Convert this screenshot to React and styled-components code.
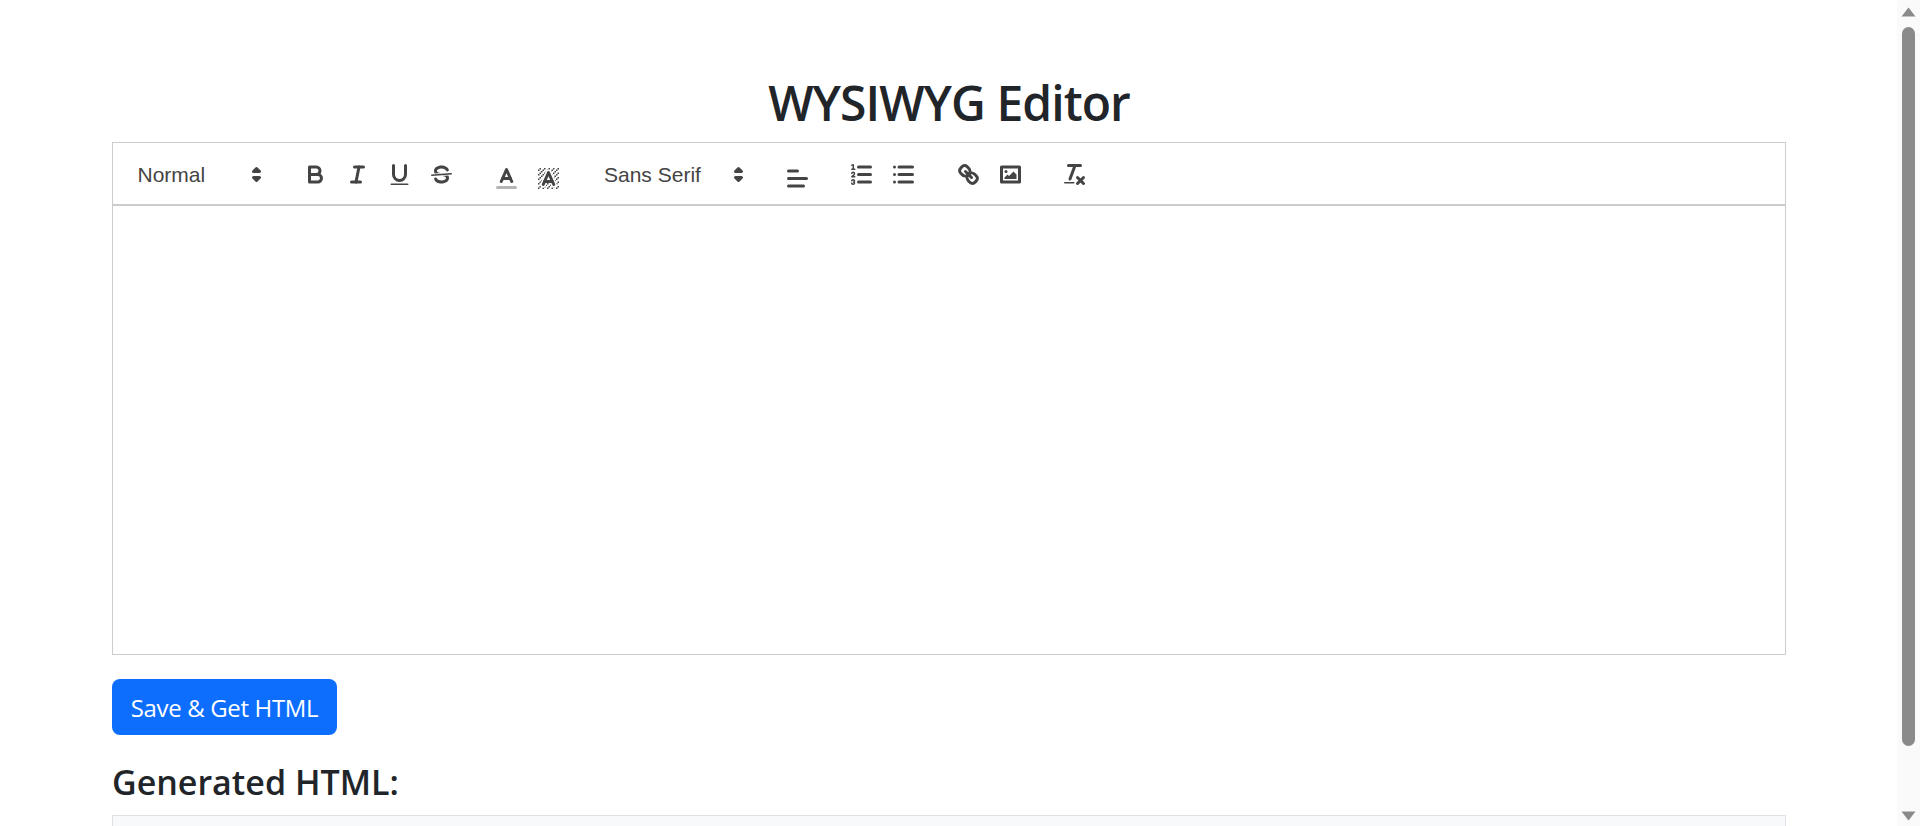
import styled, { createGlobalStyle } from 'styled-components';

const GlobalStyle = createGlobalStyle`
    html, body {
        margin: 0;
        height: 100%;
        overflow: hidden;
        background: #fff;
    }
`;

const Page = styled.div`
    display: flex;
    height: 826px;
    overflow: hidden;
`;

const Main = styled.main`
    flex: 1;
    min-width: 0;
    padding: 0 111px 0 112px;
    color: #212529;
    font-family: "Open Sans", "Noto Sans", sans-serif;
`;

const Title = styled.h1`
    margin: 0;
    padding-top: 71px;
    height: 142px;
    box-sizing: border-box;
    font-size: 48px;
    line-height: 64px;
    font-weight: 600;
    text-align: center;
    letter-spacing: -0.95px;
`;

const Toolbar = styled.div`
    display: flex;
    align-items: center;
    height: 64px;
    box-sizing: border-box;
    padding: 13px 12px 11px;
    border: 1px solid #ccc;
    border-bottom-width: 2px;
`;

const Group = styled.div`
    display: flex;
    margin-right: 22.5px;
`;

const Picker = styled.div`
    display: flex;
    align-items: center;
    justify-content: space-between;
    width: ${p => p.$width}px;
    height: 36px;
    box-sizing: border-box;
    padding: 0 2px 0 12.5px;
    color: #444;
    font-family: "Liberation Sans", Arial, sans-serif;
    font-size: 21px;
`;

const ToolButton = styled.div`
    width: 42px;
    height: 36px;
    box-sizing: border-box;
    padding: 4.5px 7.5px;
    position: relative;
    top: ${p => p.$drop || 0}px;
`;

const Icon = styled.svg`
    display: block;
    width: 27px;
    height: 27px;
    flex: none;

    .s { fill: none; stroke: #444; stroke-width: 2; stroke-linecap: round; stroke-linejoin: round; }
    .t { stroke-width: 1; }
    .f { fill: #444; stroke: none; }
    .faint { opacity: 0.4; }
    .halo { fill: none; stroke: #fff; stroke-width: 4; stroke-linecap: round; stroke-linejoin: round; }
`;

const EditorArea = styled.div`
    height: 449px;
    box-sizing: border-box;
    border: 1px solid #ccc;
    border-top: 0;
`;

const SaveButton = styled.button`
    display: block;
    margin-top: 24px;
    width: 225px;
    height: 56px;
    padding: 0;
    border: 0;
    border-radius: 8px;
    background: #0d6efd;
    color: #fff;
    font-family: inherit;
    font-size: 24px;
    letter-spacing: -0.35px;
`;

const SubTitle = styled.h3`
    margin: 24px 0 0;
    height: 56px;
    font-size: 34px;
    line-height: 46px;
    font-weight: 600;
`;

const Output = styled.pre`
    margin: 0;
    height: 120px;
    box-sizing: border-box;
    border: 1px solid #dee2e6;
    background: #f8f9fa;
`;

const ScrollTrack = styled.aside`
    width: 23px;
    flex: none;
    box-sizing: border-box;
    padding: 7px 5px 5px;
    display: flex;
    flex-direction: column;
    align-items: center;
    background: #fafafa;
`;

const Thumb = styled.div`
    width: 13px;
    height: 719px;
    margin: 10px 0 65px;
    border-radius: 7px;
    background: #8a8a8a;
`;

const Arrow = styled.svg`
    display: block;
    width: 15px;
    height: 10px;
    flex: none;
    fill: #8a8a8a;
`;

function PickerArrow() {
    return (
        <Icon viewBox="0 0 18 18">
            <polygon className="s" points="7 11 9 13 11 11 7 11" />
            <polygon className="s" points="7 7 9 5 11 7 7 7" />
        </Icon>
    );
}

// diagonal hatch behind the background colour A
const hatch = [];
for (let x = 2; x < 16; x++) {
    for (let y = 2; y < 16; y++) {
        if ((x + y) % 3 === 2) hatch.push([x, y]);
    }
}

const icons = {
    bold: (
        <>
            <path className="s" d="M5,4H9.5A2.5,2.5,0,0,1,12,6.5v0A2.5,2.5,0,0,1,9.5,9H5A0,0,0,0,1,5,9V4A0,0,0,0,1,5,4Z" />
            <path className="s" d="M5,9h5.5A2.5,2.5,0,0,1,13,11.5v0A2.5,2.5,0,0,1,10.5,14H5a0,0,0,0,1,0,0V9A0,0,0,0,1,5,9Z" />
        </>
    ),
    italic: (
        <>
            <line className="s" x1="7" x2="13" y1="4" y2="4" />
            <line className="s" x1="5" x2="11" y1="14" y2="14" />
            <line className="s" x1="8" x2="10" y1="14" y2="4" />
        </>
    ),
    underline: (
        <>
            <path className="s" d="M5,3V9a4.012,4.012,0,0,0,4,4H9a4.012,4.012,0,0,0,4-4V3" />
            <rect className="f" height="1" rx="0.5" ry="0.5" width="12" x="3" y="15" />
        </>
    ),
    strike: (
        <>
            <line className="s t" x1="15.5" x2="2.5" y1="8.5" y2="9.5" />
            <path className="f" d="M9.007,8C6.542,7.791,6,7.519,6,6.5,6,5.792,7.283,5,9,5c1.571,0,2.765.679,2.969,1.309a1,1,0,0,0,1.9-.617C13.356,4.106,11.354,3,9,3,6.2,3,4,4.538,4,6.5a3.2,3.2,0,0,0,.5,1.843Z" />
            <path className="f" d="M8.984,10C11.457,10.208,12,10.479,12,11.5c0,.708-1.283,1.5-3,1.5-1.571,0-2.765-.679-2.969-1.309a1,1,0,1,0-1.9.617C4.644,13.894,6.646,15,9,15c2.8,0,5-1.538,5-3.5a3.2,3.2,0,0,0-.5-1.843Z" />
        </>
    ),
    color: (
        <>
            <line className="s faint" x1="3" x2="15" y1="15" y2="15" />
            <polyline className="s" points="5.5 11 9 3 12.5 11" />
            <line className="s" x1="11.63" x2="6.38" y1="9" y2="9" />
        </>
    ),
    background: (
        <>
            {hatch.map(([x, y]) => (
                <rect key={`${x}-${y}`} className="f" x={x} y={y} width="1" height="1" />
            ))}
            <polyline className="halo" points="5.5 13 9 5 12.5 13" />
            <polyline className="s" points="5.5 13 9 5 12.5 13" />
            <line className="s" x1="11.63" x2="6.38" y1="11" y2="11" />
        </>
    ),
    align: (
        <>
            <line className="s" x1="3" x2="15" y1="9" y2="9" />
            <line className="s" x1="3" x2="13" y1="14" y2="14" />
            <line className="s" x1="3" x2="9" y1="4" y2="4" />
        </>
    ),
    ordered: (
        <>
            <line className="s" x1="7" x2="15" y1="4" y2="4" />
            <line className="s" x1="7" x2="15" y1="9" y2="9" />
            <line className="s" x1="7" x2="15" y1="14" y2="14" />
            <line className="s t" x1="2.5" x2="4.5" y1="5.5" y2="5.5" />
            <path className="f" d="M3.5,6A0.5,0.5,0,0,1,3,5.5V3.085l-0.276.138A0.5,0.5,0,0,1,2.053,3c-0.124-.247-0.023-0.324.224-0.447l1-.5A0.5,0.5,0,0,1,4,2.5v3A0.5,0.5,0,0,1,3.5,6Z" />
            <path className="s t" d="M4.5,10.5h-2c0-.234,1.85-1.076,1.85-2.234A0.959,0.959,0,0,0,2.5,8.156" />
            <path className="s t" d="M2.5,14.846a0.959,0.959,0,0,0,1.85-.109A0.7,0.7,0,0,0,3.75,14a0.688,0.688,0,0,0,.6-0.736,0.959,0.959,0,0,0-1.85-.109" />
        </>
    ),
    bullet: (
        <>
            <line className="s" x1="6" x2="15" y1="4" y2="4" />
            <line className="s" x1="6" x2="15" y1="9" y2="9" />
            <line className="s" x1="6" x2="15" y1="14" y2="14" />
            <line className="s" x1="3" x2="3" y1="4" y2="4" />
            <line className="s" x1="3" x2="3" y1="9" y2="9" />
            <line className="s" x1="3" x2="3" y1="14" y2="14" />
        </>
    ),
    link: (
        <>
            <line className="s" x1="7" x2="11" y1="7" y2="11" />
            <path className="s" d="M8.9,4.577a3.476,3.476,0,0,1,.36,4.679A3.476,3.476,0,0,1,4.577,8.9C3.185,7.5,2.035,6.4,4.217,4.217S7.5,3.185,8.9,4.577Z" />
            <path className="s" d="M13.423,9.1a3.476,3.476,0,0,0-4.679-.36,3.476,3.476,0,0,0,.36,4.679c1.392,1.392,2.5,2.542,4.679.36S14.815,10.5,13.423,9.1Z" />
        </>
    ),
    image: (
        <>
            <rect className="s" height="10" width="12" x="3" y="4" />
            <circle className="f" cx="6" cy="7" r="1" />
            <polyline className="f" points="5 12 5 11 7 9 8 10 11 7 13 9 13 12 5 12" />
        </>
    ),
    clean: (
        <>
            <line className="s" x1="5" x2="13" y1="3" y2="3" />
            <line className="s" x1="6" x2="9.35" y1="12" y2="3" />
            <line className="s" x1="11" x2="15" y1="11" y2="15" />
            <line className="s" x1="15" x2="11" y1="11" y2="15" />
            <rect className="f" height="1" rx="0.5" ry="0.5" width="7" x="2" y="14" />
        </>
    ),
};

function Tool({ name, drop }) {
    return (
        <ToolButton $drop={drop}>
            <Icon viewBox="0 0 18 18">{icons[name]}</Icon>
        </ToolButton>
    );
}

function App() {
    return (
        <Page>
            <GlobalStyle />
            <Main>
                <Title>WYSIWYG Editor</Title>
                <Toolbar>
                    <Group>
                        <Picker $width={147}>Normal<PickerArrow /></Picker>
                    </Group>
                    <Group>
                        <Tool name="bold" />
                        <Tool name="italic" />
                        <Tool name="underline" />
                        <Tool name="strike" />
                    </Group>
                    <Group>
                        <Tool name="color" drop={4} />
                        <Tool name="background" drop={4} />
                    </Group>
                    <Group>
                        <Picker $width={162}>Sans Serif<PickerArrow /></Picker>
                    </Group>
                    <Group>
                        <Tool name="align" drop={4} />
                    </Group>
                    <Group>
                        <Tool name="ordered" />
                        <Tool name="bullet" />
                    </Group>
                    <Group>
                        <Tool name="link" />
                        <Tool name="image" />
                    </Group>
                    <Group>
                        <Tool name="clean" />
                    </Group>
                </Toolbar>
                <EditorArea />
                <SaveButton>Save &amp; Get HTML</SaveButton>
                <SubTitle>Generated HTML:</SubTitle>
                <Output />
            </Main>
            <ScrollTrack>
                <Arrow viewBox="0 0 15 10"><path d="M7.5 0.5 L14.5 9.5 L0.5 9.5 Z" /></Arrow>
                <Thumb />
                <Arrow viewBox="0 0 15 10"><path d="M0.5 0.5 L14.5 0.5 L7.5 9.5 Z" /></Arrow>
            </ScrollTrack>
        </Page>
    );
}

export default App;
